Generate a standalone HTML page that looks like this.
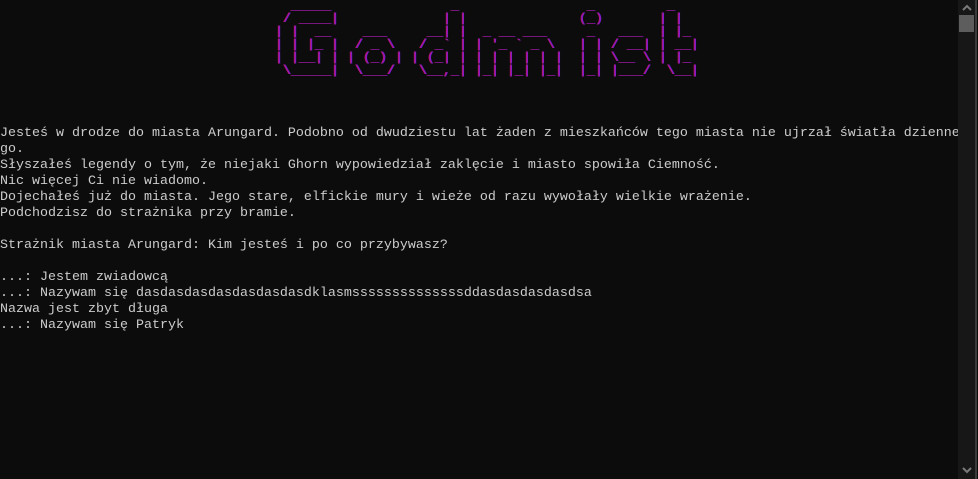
<!DOCTYPE html>
<html><head><meta charset="utf-8"><style>
html,body{margin:0;padding:0;background:#0c0c0c;width:978px;height:479px;overflow:hidden;}
pre{margin:0;font-family:"Liberation Mono",monospace;font-size:13.33px;position:absolute;left:0;white-space:pre;}
#art{top:0;left:267px;line-height:13px;color:#9a1aa8;text-shadow:-0.6px 0 #c0145a,0.6px 0 #6a1ee0;}
#txt{top:126px;line-height:16px;color:#cccccc;}
#sb{position:absolute;left:958px;top:0;width:17px;height:479px;background:#171717;}
#sbl{position:absolute;left:975px;top:0;width:2px;height:479px;background:#3a3a3a;}
#thumb{position:absolute;left:959px;top:15px;width:15px;height:17px;background:#5d5d5d;}
</style></head><body>
<pre id="art">   _____               _                _         _   
  / ____|             | |              (_)       | |  
 | |  __    ___     __| |  _ __ ___     _   ___  | |_ 
 | | |_ |  / _ \   / _` | | '_ ` _ \   | | / __| | __|
 | |__| | | (_) | | (_| | | | | | | |  | | \__ \ | |_ 
  \_____|  \___/   \__,_| |_| |_| |_|  |_| |___/  \__|</pre>
<pre id="txt">Jesteś w drodze do miasta Arungard. Podobno od dwudziestu lat żaden z mieszkańców tego miasta nie ujrzał światła dzienne
go.
Słyszałeś legendy o tym, że niejaki Ghorn wypowiedział zaklęcie i miasto spowiła Ciemność.
Nic więcej Ci nie wiadomo.
Dojechałeś już do miasta. Jego stare, elfickie mury i wieże od razu wywołały wielkie wrażenie.
Podchodzisz do strażnika przy bramie.

Strażnik miasta Arungard: Kim jesteś i po co przybywasz?

...: Jestem zwiadowcą
...: Nazywam się dasdasdasdasdasdasdasdklasmssssssssssssssddasdasdasdasdsa
Nazwa jest zbyt długa
...: Nazywam się Patryk</pre>
<div id="sb"></div><div id="sbl"></div><div id="thumb"></div>
<svg style="position:absolute;left:961px;top:3px" width="12" height="9"><path d="M2 7 L6 3 L10 7" stroke="#7a7a7a" stroke-width="2" fill="none"/></svg>
<svg style="position:absolute;left:961px;top:466px" width="12" height="9"><path d="M2 2 L6 6 L10 2" stroke="#7a7a7a" stroke-width="2" fill="none"/></svg>
</body></html>
